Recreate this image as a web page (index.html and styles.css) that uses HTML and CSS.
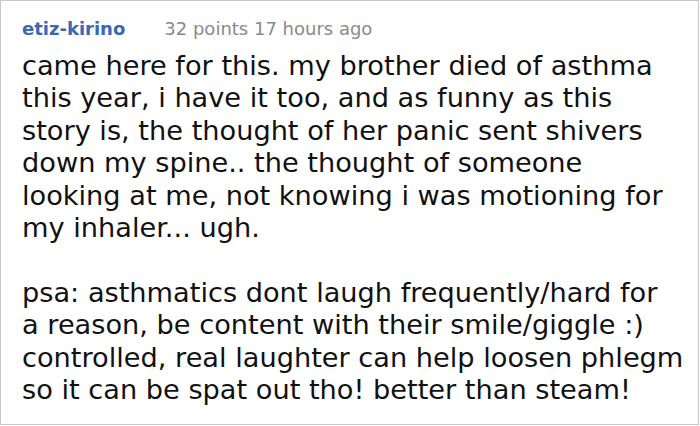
FILE: index.html
```html
<!DOCTYPE html>
<html>
<head>
<meta charset="utf-8">
<link rel="stylesheet" href="styles.css">
</head>
<body>
<div class="card">
  <div class="meta">
    <span class="user">etiz-kirino</span>
    <span class="info">32 points 17 hours ago</span>
  </div>
  <p class="text">came here for this. my brother died of asthma<br>this year, i have it too, and as funny as this<br>story is, the thought of her panic sent shivers<br>down my spine.. the thought of someone<br>looking at me, not knowing i was motioning for<br>my inhaler... ugh.</p>
  <p class="text gap">psa: asthmatics dont laugh frequently/hard for<br>a reason, be content with their smile/giggle :)<br>controlled, real laughter can help loosen phlegm<br>so it can be spat out tho! better than steam!</p>
</div>
</body>
</html>
```
FILE: styles.css
```css
html, body {
  margin: 0;
  padding: 0;
  background: #fff;
}
.card {
  box-sizing: border-box;
  width: 699px;
  height: 425px;
  border: 1px solid #c8c8c8;
  padding: 17px 2px 0 21px;
  font-family: "DejaVu Sans", Verdana, sans-serif;
}
.meta {
  display: flex;
  align-items: baseline;
  gap: 39px;
  height: 32px;
}
.user {
  color: #3a68b4;
  font-weight: bold;
  font-size: 18px;
}
.info {
  color: #8a8a8a;
  font-size: 18px;
}
.text {
  margin: 0;
  font-size: 27.2px;
  line-height: 32.4px;
  color: #111;
  white-space: nowrap;
}
.gap {
  margin-top: 32.4px;
}
```
